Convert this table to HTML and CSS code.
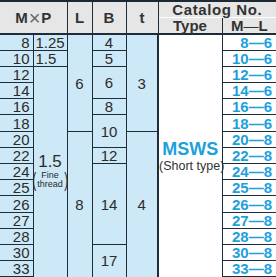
FILE: index.html
```html
<!DOCTYPE html>
<html>
<head>
<meta charset="utf-8">
<link rel="stylesheet" href="styles.css">
</head>
<body>
<table class="spec">
  <colgroup>
    <col class="c-m"><col class="c-p"><col class="c-l"><col class="c-b"><col class="c-t"><col class="c-type"><col class="c-ml">
  </colgroup>
  <thead>
    <tr class="h1">
      <th colspan="2" rowspan="2" class="hd">M<span class="x">×</span>P</th>
      <th rowspan="2" class="hd">L</th>
      <th rowspan="2" class="hd">B</th>
      <th rowspan="2" class="hd">t</th>
      <th colspan="2" class="hd cat">Catalog No.</th>
    </tr>
    <tr class="h2">
      <th class="hd sub">Type</th>
      <th class="hd sub ml-h">M<span class="dash">—</span>L</th>
    </tr>
  </thead>
  <tbody>
    <tr class="r"><td class="m">8</td><td class="p">1.25</td><td rowspan="6" class="v">6</td><td class="v">4</td><td rowspan="6" class="v">3</td>
      <td rowspan="15" class="type"><div class="brand">MSWS</div><div class="short">(Short type)</div></td><td class="ml">8—6</td></tr>
    <tr class="r"><td class="m">10</td><td class="p">1.5</td><td class="v">5</td><td class="ml">10—6</td></tr>
    <tr class="r"><td class="m">12</td><td rowspan="13" class="p fine"><div class="fine-box"><div class="big">1.5</div><div class="paren"><span class="br">(</span><span class="ft"><span>Fine</span><span>thread</span></span><span class="br">)</span></div></div></td><td rowspan="2" class="v">6</td><td class="ml">12—6</td></tr>
    <tr class="r"><td class="m">14</td><td class="ml">14—6</td></tr>
    <tr class="r"><td class="m">16</td><td class="v">8</td><td class="ml">16—6</td></tr>
    <tr class="r r17"><td class="m">18</td><td rowspan="2" class="v">10</td><td class="ml">18—6</td></tr>
    <tr class="r"><td class="m">20</td><td rowspan="9" class="v">8</td><td rowspan="9" class="v">4</td><td class="ml">20—8</td></tr>
    <tr class="r"><td class="m">22</td><td class="v">12</td><td class="ml">22—8</td></tr>
    <tr class="r"><td class="m">24</td><td rowspan="5" class="v">14</td><td class="ml">24—8</td></tr>
    <tr class="r"><td class="m">25</td><td class="ml">25—8</td></tr>
    <tr class="r r17"><td class="m">26</td><td class="ml">26—8</td></tr>
    <tr class="r"><td class="m">27</td><td class="ml">27—8</td></tr>
    <tr class="r"><td class="m">28</td><td class="ml">28—8</td></tr>
    <tr class="r"><td class="m">30</td><td rowspan="2" class="v">17</td><td class="ml">30—8</td></tr>
    <tr class="r"><td class="m">33</td><td class="ml">33—8</td></tr>
  </tbody>
</table>
</body>
</html>
```
FILE: styles.css
```css
html, body {
  margin: 0;
  padding: 0;
  background: #ffffff;
}
body {
  width: 276px;
  height: 277px;
  overflow: hidden;
}
.spec {
  border-collapse: collapse;
  table-layout: fixed;
  width: 276px;
  font-family: "Liberation Sans Narrow", "Liberation Sans", Arial, sans-serif;
  color: #2b2b2b;
  border-top: 2px solid #1c2833;
}
.c-m { width: 33px; }
.c-p { width: 34px; }
.c-l { width: 25px; }
.c-b { width: 34px; }
.c-t { width: 32px; }
.c-type { width: 64px; }
.c-ml { width: 54px; }

td, th {
  padding: 0;
  border: 1px solid #1f2d3a;
  background: #cde8f7;
  font-weight: normal;
  line-height: 1;
}
.spec tr > :first-child { border-left: none; }
.spec tr > :last-child { border-right: none; }
.spec tbody tr:last-child td { border-bottom: 2px solid #1f2d3a; }

.hd {
  background: #e6e6e6;
  font-family: "Liberation Sans", Arial, sans-serif;
  font-weight: bold;
  font-size: 15px;
  color: #333333;
  text-align: center;
  border-bottom: 2px solid #1f2d3a;
}
.h1 { height: 15px; }
.h2 { height: 16px; }
.cat {
  border-bottom: 1px solid #ffffff;
  letter-spacing: 0.6px;
  vertical-align: middle;
}
.sub { vertical-align: middle; }
.x {
  font-weight: normal;
  font-size: 20px;
  line-height: 14px;
  color: #666;
  margin: 0 1px;
  vertical-align: -2px;
}
.dash { font-weight: normal; }

.r { height: 16px; }
.r17 { height: 17px; }

.m {
  text-align: right;
  padding-right: 3px;
  font-size: 15px;
}
.p {
  text-align: left;
  padding-left: 2px;
  font-size: 15px;
}
.v {
  text-align: center;
  font-size: 15px;
}
.fine {
  text-align: center;
  padding-left: 0;
  vertical-align: middle;
}
.fine-box {
  display: flex;
  flex-direction: column;
  align-items: center;
}
.big { font-size: 17px; }
.paren {
  display: flex;
  align-items: center;
  margin-top: 0;
}
.br {
  font-size: 20px;
  transform: scaleX(0.6);
  line-height: 1;
}
.ft {
  display: flex;
  flex-direction: column;
  align-items: center;
  font-size: 9px;
  line-height: 9px;
}
.type {
  background: #ffffff;
  text-align: center;
  vertical-align: middle;
  border-left: 2px solid #1f2d3a;
  white-space: nowrap;
}
.brand {
  font-family: "Liberation Sans", Arial, sans-serif;
  font-weight: bold;
  font-size: 18px;
  color: #1ea0dc;
}
.short {
  font-size: 12.5px;
  margin-top: 2px;
  color: #333;
}
.ml {
  background: #ffffff;
  text-align: right;
  padding-right: 4px;
  font-family: "Liberation Sans", Arial, sans-serif;
  font-weight: bold;
  font-size: 15px;
  color: #1ea0dc;
}
```
